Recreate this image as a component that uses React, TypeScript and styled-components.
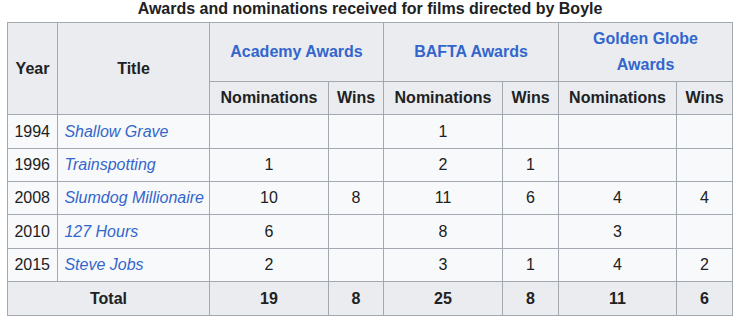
import styled, { createGlobalStyle } from 'styled-components';

interface FilmRow {
  year: number;
  title: string;
  academy: [string, string];
  bafta: [string, string];
  globe: [string, string];
}

const films: FilmRow[] = [
  { year: 1994, title: 'Shallow Grave', academy: ['', ''], bafta: ['1', ''], globe: ['', ''] },
  { year: 1996, title: 'Trainspotting', academy: ['1', ''], bafta: ['2', '1'], globe: ['', ''] },
  { year: 2008, title: 'Slumdog Millionaire', academy: ['10', '8'], bafta: ['11', '6'], globe: ['4', '4'] },
  { year: 2010, title: '127 Hours', academy: ['6', ''], bafta: ['8', ''], globe: ['3', ''] },
  { year: 2015, title: 'Steve Jobs', academy: ['2', ''], bafta: ['3', '1'], globe: ['4', '2'] },
];

const totals = ['19', '8', '25', '8', '11', '6'];
const colWidths = [50, 152, 119, 55, 119, 56, 118, 56];
const awards = ['Academy Awards', 'BAFTA Awards', 'Golden Globe Awards'];

const App = () => {
  return (
    <Page>
      <GlobalStyle />
      <Table>
        <Caption>Awards and nominations received for films directed by Boyle</Caption>
        <colgroup>
          {colWidths.map((w, i) => (
            <col key={i} style={{ width: w }} />
          ))}
        </colgroup>
        <thead>
          <tr>
            <Th rowSpan={2}>Year</Th>
            <Th rowSpan={2}>Title</Th>
            {awards.map((name) => (
              <Th key={name} colSpan={2}>
                <Link>{name}</Link>
              </Th>
            ))}
          </tr>
          <tr>
            {awards.map((name) => [
              <Th key={name + 'n'}>Nominations</Th>,
              <Th key={name + 'w'}>Wins</Th>,
            ])}
          </tr>
        </thead>
        <tbody>
          {films.map((film) => (
            <tr key={film.year}>
              <Td>{film.year}</Td>
              <Td>
                <Link as="i">{film.title}</Link>
              </Td>
              {[...film.academy, ...film.bafta, ...film.globe].map((v, i) => (
                <Td key={i} $center>
                  {v}
                </Td>
              ))}
            </tr>
          ))}
          <tr>
            <Th colSpan={2}>Total</Th>
            {totals.map((v, i) => (
              <Th key={i}>{v}</Th>
            ))}
          </tr>
        </tbody>
      </Table>
    </Page>
  );
};

export default App;

const GlobalStyle = createGlobalStyle`
  body {
    margin: 0;
    background: #ffffff;
    font-family: "Liberation Sans", Arial, sans-serif;
    color: #202122;
  }
`;

const Page = styled.div`
  padding: 0 0 0 7px;
`;

const Table = styled.table`
  width: 725px;
  table-layout: fixed;
  border-collapse: collapse;
  background: #f8f9fa;
  border: 1px solid #a2a9b1;
  font-size: 16px;
  line-height: 1.6;
  color: #202122;
`;

const Caption = styled.caption`
  font-weight: bold;
  line-height: 18px;
  padding-bottom: 4px;
  text-align: center;
`;

const Th = styled.th`
  background: #eaecf0;
  border: 1px solid #a2a9b1;
  padding: 3.4px 6.4px;
  text-align: center;
  font-weight: bold;
`;

const Td = styled.td<{ $center?: boolean }>`
  border: 1px solid #a2a9b1;
  padding: 3.4px 6.4px;
  text-align: ${(p) => (p.$center ? 'center' : 'left')};
  white-space: nowrap;
`;

const Link = styled.span`
  color: #3366cc;
`;
